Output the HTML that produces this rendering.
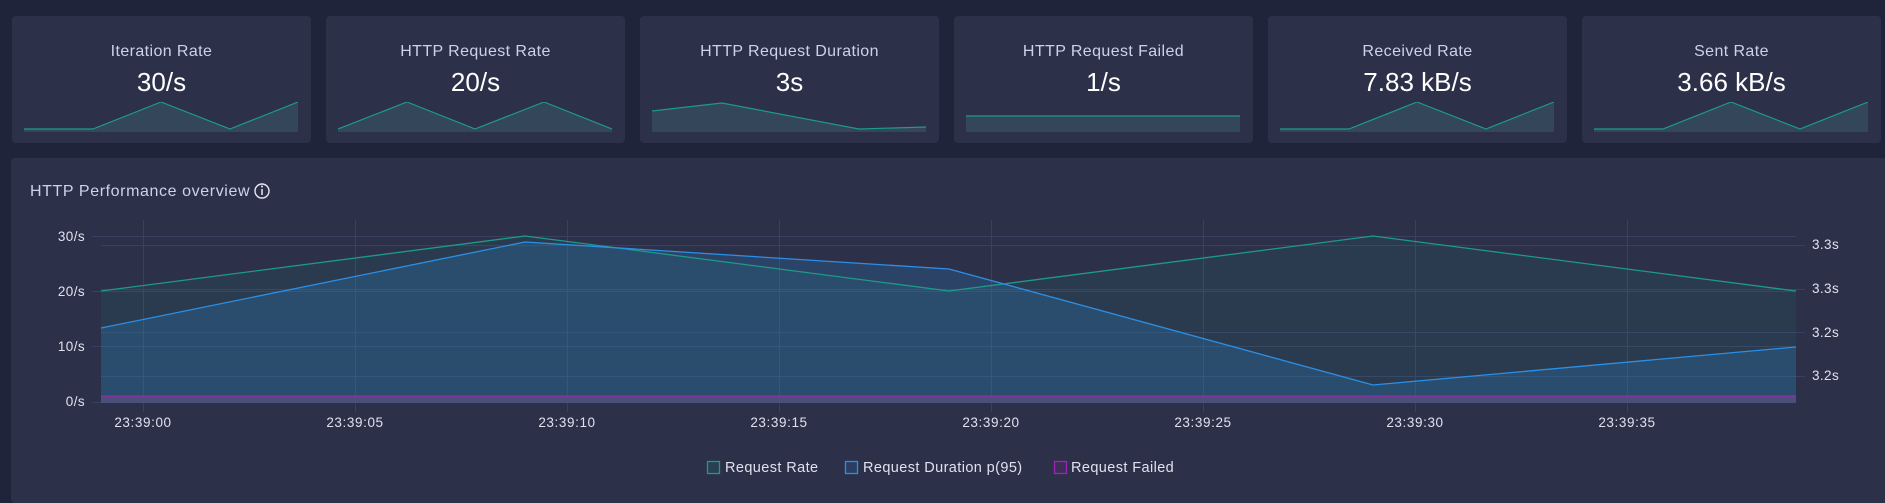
<!DOCTYPE html>
<html><head><meta charset="utf-8"><style>
body{margin:0;width:1885px;height:498px;background:#20243a;font-family:"Liberation Sans",sans-serif;overflow:hidden;position:relative}
.card{position:absolute;top:16px;width:299px;height:127px;background:#2c3049;border-radius:4px}
.t{position:absolute;top:27px;left:0;right:0;text-align:center;color:#cdd2ea;font-size:16px;letter-spacing:0.4px}
.v{position:absolute;top:51px;left:0;right:0;text-align:center;color:#fff;font-size:26px}
.sp{position:absolute;left:12px;top:86px}
.panel{position:absolute;left:11px;top:158px;width:1880px;height:345px;background:#2c3049;border-radius:4px}
</style></head><body>
<div class="card" style="left:12px"><div class="t">Iteration Rate</div><div class="v">30/s</div>
<svg class="sp" width="275" height="31"><polygon points="0,30 0,27 69,27 137,0 206,27 274,0 274,30" fill="#34465a"/><polyline points="0,27 69,27 137,0 206,27 274,0" fill="none" stroke="#1d9a88" stroke-width="1.2"/></svg></div>
<div class="card" style="left:326px"><div class="t">HTTP Request Rate</div><div class="v">20/s</div>
<svg class="sp" width="275" height="31"><polygon points="0,30 0,27 69,0 137,27 206,0 274,27 274,30" fill="#34465a"/><polyline points="0,27 69,0 137,27 206,0 274,27" fill="none" stroke="#1d9a88" stroke-width="1.2"/></svg></div>
<div class="card" style="left:640px"><div class="t">HTTP Request Duration</div><div class="v">3s</div>
<svg class="sp" width="275" height="31"><polygon points="0,30 0,9 70,1 207,27 274,25 274,30" fill="#34465a"/><polyline points="0,9 70,1 207,27 274,25" fill="none" stroke="#1d9a88" stroke-width="1.2"/></svg></div>
<div class="card" style="left:954px"><div class="t">HTTP Request Failed</div><div class="v">1/s</div>
<svg class="sp" width="275" height="31"><rect x="0" y="14" width="274" height="16" fill="#34465a"/><line x1="0" y1="14" x2="274" y2="14" stroke="#1d9a88" stroke-width="1.2"/></svg></div>
<div class="card" style="left:1268px"><div class="t">Received Rate</div><div class="v">7.83 kB/s</div>
<svg class="sp" width="275" height="31"><polygon points="0,30 0,27 69,27 137,0 206,27 274,0 274,30" fill="#34465a"/><polyline points="0,27 69,27 137,0 206,27 274,0" fill="none" stroke="#1d9a88" stroke-width="1.2"/></svg></div>
<div class="card" style="left:1582px"><div class="t">Sent Rate</div><div class="v">3.66 kB/s</div>
<svg class="sp" width="275" height="31"><polygon points="0,30 0,27 69,27 137,0 206,27 274,0 274,30" fill="#34465a"/><polyline points="0,27 69,27 137,0 206,27 274,0" fill="none" stroke="#1d9a88" stroke-width="1.2"/></svg></div>
<div class="panel"></div>
<svg style="position:absolute;left:0;top:0" width="1885" height="498" font-family="Liberation Sans, sans-serif">
<text x="30" y="196" fill="#cdd2ea" font-size="16" letter-spacing="0.6">HTTP Performance overview</text>
<circle cx="262" cy="191" r="7" fill="none" stroke="#e6e9f5" stroke-width="1.4"/><line x1="262" y1="189" x2="262" y2="195" stroke="#e6e9f5" stroke-width="1.5"/><circle cx="262" cy="186.5" r="1" fill="#e6e9f5"/>
<g stroke="#3a4060" stroke-width="1">
<line x1="143.5" y1="220" x2="143.5" y2="412"/><line x1="355.5" y1="220" x2="355.5" y2="412"/><line x1="567.5" y1="220" x2="567.5" y2="412"/><line x1="779.5" y1="220" x2="779.5" y2="412"/><line x1="991.5" y1="220" x2="991.5" y2="412"/><line x1="1203.5" y1="220" x2="1203.5" y2="412"/><line x1="1415.5" y1="220" x2="1415.5" y2="412"/><line x1="1627.5" y1="220" x2="1627.5" y2="412"/>
<line x1="92" y1="236.5" x2="1796" y2="236.5"/><line x1="92" y1="291.5" x2="1796" y2="291.5"/><line x1="92" y1="346.5" x2="1796" y2="346.5"/><line x1="92" y1="402.5" x2="1796" y2="402.5"/>
<line x1="101" y1="245.5" x2="1805" y2="245.5"/><line x1="101" y1="289.5" x2="1805" y2="289.5"/><line x1="101" y1="332.5" x2="1805" y2="332.5"/><line x1="101" y1="376.5" x2="1805" y2="376.5"/>
</g>
<polygon points="101,403 101,291 525,236 949,291 1373,236 1796,291 1796,403" fill="#1d9a88" fill-opacity="0.1"/>
<polygon points="101,403 101,328 525,242 949,269 1373,385 1796,347 1796,403" fill="#2b8fe6" fill-opacity="0.2"/>
<rect x="101" y="396" width="1695" height="7" fill="#4a5078"/>
<line x1="101" y1="396" x2="1796" y2="396" stroke="#a024b4" stroke-width="1.3"/>
<polyline points="101,291 525,236 949,291 1373,236 1796,291" fill="none" stroke="#1d9a88" stroke-width="1.3"/>
<polyline points="101,328 525,242 949,269 1373,385 1796,347" fill="none" stroke="#2b8fe6" stroke-width="1.3"/>
<g fill="#dfe2ee" font-size="13.5" letter-spacing="0.4" text-anchor="end">
<text x="85" y="241">30/s</text><text x="85" y="296">20/s</text><text x="85" y="351">10/s</text><text x="85" y="406">0/s</text></g>
<g fill="#dfe2ee" font-size="13.5" letter-spacing="0.4">
<text x="1812" y="249">3.3s</text><text x="1812" y="293">3.3s</text><text x="1812" y="337">3.2s</text><text x="1812" y="380">3.2s</text></g>
<g fill="#dfe2ee" font-size="13.5" letter-spacing="0.6" text-anchor="middle">
<text x="143" y="427">23:39:00</text><text x="355" y="427">23:39:05</text><text x="567" y="427">23:39:10</text><text x="779" y="427">23:39:15</text><text x="991" y="427">23:39:20</text><text x="1203" y="427">23:39:25</text><text x="1415" y="427">23:39:30</text><text x="1627" y="427">23:39:35</text></g>
<rect x="707.5" y="461.5" width="12" height="12" fill="#1d9a88" fill-opacity="0.15" stroke="#1d9a88" stroke-width="1.3"/>
<text x="725" y="472" fill="#dfe2ee" font-size="14.5" letter-spacing="0.4">Request Rate</text>
<rect x="845.5" y="461.5" width="12" height="12" fill="#2b8fe6" fill-opacity="0.15" stroke="#2b8fe6" stroke-width="1.3"/>
<text x="863" y="472" fill="#dfe2ee" font-size="14.5" letter-spacing="0.4">Request Duration p(95)</text>
<rect x="1054.5" y="461.5" width="12" height="12" fill="#a024b4" fill-opacity="0.15" stroke="#a024b4" stroke-width="1.3"/>
<text x="1071" y="472" fill="#dfe2ee" font-size="14.5" letter-spacing="0.4">Request Failed</text>
</svg>
</body></html>
